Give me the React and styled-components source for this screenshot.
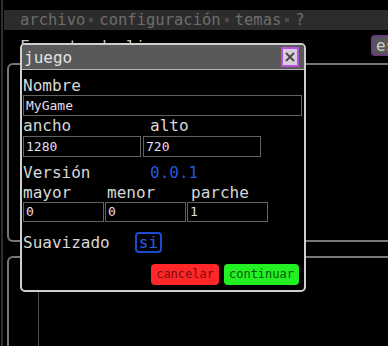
import React from 'react';
import styled, { createGlobalStyle } from 'styled-components';

const GlobalStyle = createGlobalStyle`
  html, body {
    margin: 0;
    padding: 0;
    background: #000;
    overflow: hidden;
  }
  body {
    font-family: 'DejaVu Sans Mono', 'Liberation Mono', monospace;
  }
`;

const Page = styled.div`
  position: relative;
  display: flex;
  height: 346px;
  background: #000;
  overflow: hidden;
`;

const Rail = styled.div`
  width: 2px;
  margin-left: 1px;
  background: #2f2f2f;
`;

const Main = styled.div`
  flex: 1;
  display: flex;
  flex-direction: column;
  padding-top: 10px;
  margin-left: 1px;
  min-width: 0;
  overflow: hidden;
`;

const MenuBar = styled.div`
  flex-shrink: 0;
  display: flex;
  align-items: center;
  height: 20px;
  padding-left: 16px;
  background: #2c2c2c;
  color: #6c6c6c;
  font-size: 15.5px;
  line-height: 20px;
`;

const MenuDot = styled.span`
  width: 4px;
  height: 4px;
  margin: 0 6px 0 4px;
  background: #4a4a4a;
`;

const Strip = styled.div`
  flex-shrink: 0;
  display: flex;
  justify-content: space-between;
  align-items: flex-start;
  height: 33px;
  padding-left: 16px;
`;

const Ghost = styled.div`
  color: #c8c8c8;
  font-size: 16px;
  line-height: 16px;
  padding-top: 9px;
`;

const LangButton = styled.div`
  margin-top: 5px;
  margin-right: -20px;
  width: 30px;
  height: 17px;
  border: 2px solid #6a3c7c;
  border-radius: 4px;
  background: #575757;
  color: #cfcfcf;
  font-size: 16px;
  line-height: 17px;
  padding-left: 3px;
`;

const Panel = styled.div`
  flex-shrink: 0;
  display: flex;
  margin-left: 3px;
  margin-right: -10px;
  margin-top: ${p => p.$mt || 0}px;
  height: ${p => p.$h}px;
  border: 2px solid #777;
  border-right: none;
  border-radius: 6px 0 0 6px;
`;

const Gutter = styled.div`
  width: 29px;
  border-right: 1px solid #4a4a4a;
`;

const Dialog = styled.div`
  position: absolute;
  left: 20px;
  top: 43px;
  width: 286px;
  height: 249px;
  box-sizing: border-box;
  border: 2px solid #cfcfcf;
  border-radius: 5px;
  background: #000;
  display: flex;
  flex-direction: column;
  overflow: hidden;
`;

const TitleBar = styled.div`
  display: flex;
  align-items: center;
  justify-content: space-between;
  height: 24px;
  padding: 0 5px 0 2px;
  background: #595959;
  border-bottom: 1px solid #b8b8b8;
  color: #e2e2e2;
  font-size: 16px;
`;

const CloseButton = styled.div`
  display: flex;
  align-items: center;
  justify-content: center;
  box-sizing: border-box;
  width: 18px;
  height: 20px;
  border: 2px solid #b452dc;
  background: #d7d0dc;
`;

const Body = styled.div`
  display: flex;
  flex-direction: column;
  padding: 6px 2px 5px 1px;
  color: #d8d8d8;
  font-size: 16px;
`;

const LabelRow = styled.div`
  display: grid;
  grid-template-columns: ${p => p.$cols || '1fr'};
  height: ${p => p.$h || 19}px;
  line-height: ${p => p.$h || 19}px;
  margin-top: ${p => p.$mt || 0}px;
  white-space: nowrap;
`;

const Version = styled.span`
  color: #2458dc;
`;

const InputRow = styled.div`
  display: grid;
  grid-template-columns: ${p => p.$cols || '1fr'};
  gap: ${p => p.$gap || 0}px;
`;

const Field = styled.div`
  box-sizing: border-box;
  height: ${p => p.$h || 21}px;
  border: 1px solid #626262;
  padding-left: 2px;
  color: #e6def0;
  font-size: 13px;
  line-height: ${p => (p.$h || 21) - 2}px;
`;

const ToggleRow = styled.div`
  display: flex;
  align-items: center;
  height: 21px;
  margin-top: 10px;
`;

const ToggleLabel = styled.span`
  width: 112px;
`;

const Toggle = styled.div`
  box-sizing: border-box;
  width: 27px;
  height: 21px;
  border: 2px solid #1c4bd0;
  border-radius: 4px;
  color: #2a5ce6;
  font-size: 16px;
  line-height: 17px;
  text-align: center;
`;

const Actions = styled.div`
  display: flex;
  justify-content: flex-end;
  gap: 5px;
  margin-top: 11px;
  padding-right: 3px;
`;

const ActionButton = styled.div`
  height: 21px;
  padding: 0 5px;
  border-radius: 4px;
  background: ${p => p.$bg};
  color: ${p => p.$fg};
  font-size: 12px;
  line-height: 21px;
`;

function CloseIcon() {
  return (
    <svg width="10" height="10" viewBox="0 0 10 10">
      <path d="M1 1 L9 9 M9 1 L1 9" stroke="#454545" strokeWidth="1.8" />
    </svg>
  );
}

export default function App() {
  return (
    <>
      <GlobalStyle />
      <Page>
        <Rail />
        <Main>
          <MenuBar>
            archivo<MenuDot />configuración<MenuDot />temas<MenuDot />?
          </MenuBar>
          <Strip>
            <Ghost>Formato de lienzo</Ghost>
            <LangButton>es</LangButton>
          </Strip>
          <Panel $h={175} />
          <Panel $h={120} $mt={14}>
            <Gutter />
          </Panel>
        </Main>

        <Dialog>
          <TitleBar>
            juego
            <CloseButton>
              <CloseIcon />
            </CloseButton>
          </TitleBar>
          <Body>
            <LabelRow>Nombre</LabelRow>
            <Field>MyGame</Field>

            <LabelRow $cols="127px 1fr" $h={20}>
              <span>ancho</span>
              <span>alto</span>
            </LabelRow>
            <InputRow $cols="118px 118px" $gap={2}>
              <Field>1280</Field>
              <Field>720</Field>
            </InputRow>

            <LabelRow $cols="127px 1fr" $h={21} $mt={5}>
              <span>Versión</span>
              <Version>0.0.1</Version>
            </LabelRow>
            <LabelRow $cols="84px 84px 1fr">
              <span>mayor</span>
              <span>menor</span>
              <span>parche</span>
            </LabelRow>
            <InputRow $cols="81px 81px 81px" $gap={1}>
              <Field $h={20}>0</Field>
              <Field $h={20}>0</Field>
              <Field $h={20}>1</Field>
            </InputRow>

            <ToggleRow>
              <ToggleLabel>Suavizado</ToggleLabel>
              <Toggle>si</Toggle>
            </ToggleRow>

            <Actions>
              <ActionButton $bg="#ff2727" $fg="#7c0c0c">cancelar</ActionButton>
              <ActionButton $bg="#23f023" $fg="#0b560b">continuar</ActionButton>
            </Actions>
          </Body>
        </Dialog>
      </Page>
    </>
  );
}
